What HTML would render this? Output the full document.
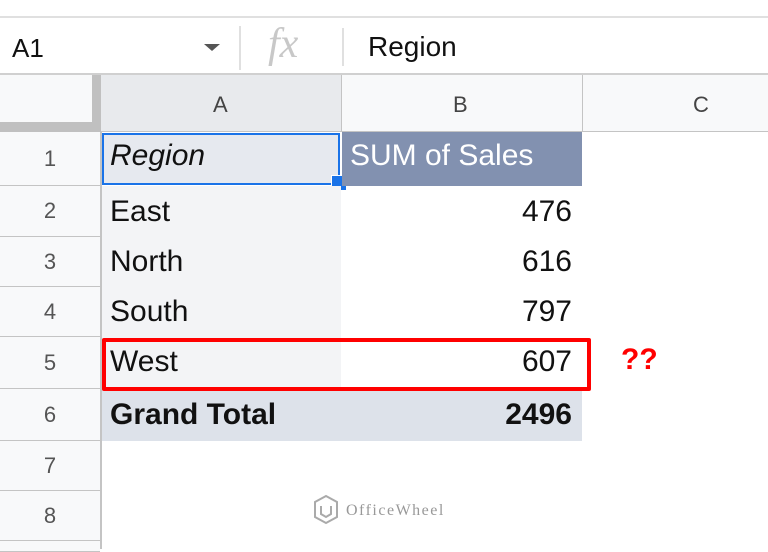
<!DOCTYPE html>
<html><head><style>
body{margin:0;width:768px;height:549px;overflow:hidden;background:#fff;font-family:"Liberation Sans",Arial,sans-serif;position:relative}
.a{position:absolute}
.t{font-size:30px;color:#111;line-height:1}
.rh{position:absolute;left:0;width:100px;background:#f8f9fa;border-bottom:1px solid #c4c4c4;color:#555;font-size:22px;text-align:center}
</style></head><body>
<div class="a" style="left:0;top:16px;width:768px;height:2px;background:#e0e0e0"></div>
<div class="a t" style="left:12px;top:35px;font-size:26px">A1</div>
<div class="a" style="left:204px;top:44px;width:0;height:0;border-left:8px solid transparent;border-right:8px solid transparent;border-top:7px solid #555"></div>
<div class="a" style="left:239px;top:26px;width:2px;height:44px;background:#e0e0e0"></div>
<div class="a" style="left:268px;top:20px;font-family:'Liberation Serif',serif;font-style:italic;font-size:42px;color:#c8c8c8">fx</div>
<div class="a" style="left:342px;top:28px;width:2px;height:38px;background:#e0e0e0"></div>
<div class="a t" style="left:368px;top:33px;font-size:28px">Region</div>
<div class="a" style="left:0;top:73px;width:768px;height:2px;background:#d0d0d0"></div>
<div class="a" style="left:0;top:75px;width:768px;height:57px;background:#f8f9fa"></div>
<div class="a" style="left:92px;top:75px;width:9px;height:57px;background:#c0c0c0"></div>
<div class="a" style="left:0;top:122px;width:101px;height:10px;background:#c0c0c0"></div>
<div class="a" style="left:101px;top:75px;width:240px;height:56px;background:#e8eaed"></div>
<div class="a" style="left:341px;top:75px;width:1px;height:57px;background:#c4c4c4"></div>
<div class="a" style="left:582px;top:75px;width:1px;height:57px;background:#c4c4c4"></div>
<div class="a" style="left:101px;top:131px;width:667px;height:1px;background:#c4c4c4"></div>
<div class="a" style="left:213px;top:92px;font-size:22px;color:#444">A</div>
<div class="a" style="left:453px;top:92px;font-size:22px;color:#444">B</div>
<div class="a" style="left:693px;top:92px;font-size:22px;color:#444">C</div>
<div class="a" style="left:100px;top:132px;width:2px;height:417px;background:#c4c4c4"></div>
<div class="rh" style="top:132px;height:53px;line-height:53px">1</div>
<div class="rh" style="top:186px;height:50px;line-height:50px">2</div>
<div class="rh" style="top:237px;height:49px;line-height:49px">3</div>
<div class="rh" style="top:287px;height:49px;line-height:49px">4</div>
<div class="rh" style="top:337px;height:51px;line-height:51px">5</div>
<div class="rh" style="top:389px;height:51px;line-height:51px">6</div>
<div class="rh" style="top:441px;height:49px;line-height:49px">7</div>
<div class="rh" style="top:491px;height:49px;line-height:49px">8</div>
<div class="rh" style="top:541px;height:10px"></div>
<div class="a" style="left:102px;top:133px;width:238px;height:52px;background:#e6e9ef;border:2px solid #1a73e8;box-sizing:border-box"></div>
<div class="a" style="left:331px;top:175px;width:14px;height:14px;background:#1a73e8;border:1px solid #fff"></div>
<div class="a" style="left:342px;top:132px;width:240px;height:54px;background:#8291b0"></div>
<div class="a" style="left:102px;top:186px;width:239px;height:203px;background:#f3f4f6"></div>
<div class="a" style="left:102px;top:389px;width:480px;height:52px;background:#dde2ea"></div>
<div class="a t" style="left:110px;top:141px;font-style:italic">Region</div>
<div class="a t" style="left:350px;top:141px;color:#fff">SUM of Sales</div>
<div class="a t" style="left:110px;top:197px">East</div>
<div class="a t" style="left:110px;top:247px">North</div>
<div class="a t" style="left:110px;top:297px">South</div>
<div class="a t" style="left:110px;top:347px">West</div>
<div class="a t" style="left:110px;top:400px;font-weight:bold">Grand Total</div>
<div class="a t" style="right:196px;top:197px">476</div>
<div class="a t" style="right:196px;top:247px">616</div>
<div class="a t" style="right:196px;top:297px">797</div>
<div class="a t" style="right:196px;top:347px">607</div>
<div class="a t" style="right:196px;top:400px;font-weight:bold">2496</div>
<div class="a" style="left:102px;top:338px;width:489px;height:53px;border:4px solid #f00;box-sizing:border-box;border-radius:2px"></div>
<div class="a t" style="left:621px;top:345px;color:#f00;font-weight:bold">??</div>
<div class="a" style="left:312px;top:494px;width:28px;height:32px">
<svg width="28" height="32" viewBox="0 0 28 32"><path d="M14 2 L25 8 L25 23 L14 29 L3 23 L3 8 Z" fill="none" stroke="#aaa" stroke-width="2"/><path d="M9 12 L9 20 L14 23 L19 20 L19 12" fill="none" stroke="#aaa" stroke-width="2"/></svg></div>
<div class="a" style="left:346px;top:502px;font-family:'Liberation Serif',serif;font-size:16px;letter-spacing:1.5px;color:#999">OfficeWheel</div>
</body></html>
